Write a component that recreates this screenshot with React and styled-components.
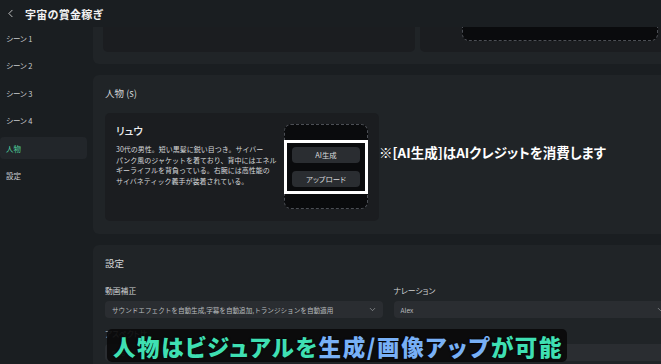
import styled, { createGlobalStyle } from 'styled-components';
import { ChevronLeft, ChevronDown } from 'lucide-react';

const GlobalStyle = createGlobalStyle`
  html, body {
    margin: 0;
    padding: 0;
    background: #1a1e21;
  }

  body {
    font-family: "Noto Sans CJK JP", "Noto Sans", sans-serif;
    font-feature-settings: "palt";
    color: #d6d8da;
  }

  #root {
    width: 661px;
    height: 364px;
    overflow: hidden;
  }
`;

const Shell = styled.div`
  position: relative;
  display: grid;
  grid-template-rows: 27px 1fr;
  width: 661px;
  height: 364px;
  overflow: hidden;
  background: #1a1e21;
`;

const Header = styled.div`
  display: flex;
  align-items: center;
  gap: 8px;
  padding-left: 4px;
  background: #1a1e21;
  color: #f2f2f2;

  h1 {
    margin: 0;
    font-size: 11px;
    font-weight: 700;
    letter-spacing: 0.3px;
  }
`;

const Body = styled.div`
  display: flex;
  min-height: 0;
`;

const Sidebar = styled.nav`
  flex: none;
  display: flex;
  flex-direction: column;
  gap: 5.6px;
  width: 87px;
  margin-right: 6px;
`;

const NavItem = styled.div`
  display: flex;
  align-items: center;
  height: 22px;
  padding-left: 6px;
  border-radius: 4px;
  font-size: 7.5px;
  color: ${({ $active }) => ($active ? '#4fcf9f' : '#c9cccf')};
  background: ${({ $active }) => ($active ? '#22262a' : 'transparent')};
`;

const Main = styled.main`
  flex: 1;
  min-width: 0;
  overflow: hidden;
`;

const Column = styled.div`
  display: flex;
  flex-direction: column;
  gap: 11px;
  width: 590px;
`;

const TopPanel = styled.section`
  display: flex;
  gap: 5px;
  padding: 0 10px 12px;
  background: #202427;
  border-radius: 0 0 6px 6px;
`;

const FlatCard = styled.div`
  flex: ${({ $grow }) => ($grow ? 1 : 'none')};
  width: ${({ $grow }) => ($grow ? 'auto' : '312px')};
  height: 25px;
  padding: ${({ $grow }) => ($grow ? '0 15px 0 42px' : '0')};
  background: #1b1d20;
  border-radius: 0 0 5px 5px;
`;

const DropZoneTail = styled.div`
  height: 13px;
  background: #0a0b0d;
  border: 1px dashed #4c4f55;
  border-top: none;
  border-radius: 0 0 7px 7px;
`;

const Panel = styled.section`
  padding: 12px 12px 13px;
  background: #202427;
  border-radius: 6px;
`;

const PanelTitle = styled.h2`
  margin: 0;
  font-size: 9.5px;
  line-height: 12px;
  font-weight: 400;
  color: #d2d4d6;
`;

const PersonRow = styled.div`
  display: flex;
  align-items: flex-start;
  margin-top: 14px;
`;

const PersonCard = styled.div`
  display: flex;
  justify-content: space-between;
  width: 274px;
  padding: 11px 11px 12px;
  box-sizing: border-box;
  background: #1b1d20;
  border-radius: 5px;
`;

const PersonText = styled.div`
  flex: none;
  width: 160px;

  h3 {
    margin: 0;
    font-size: 10.5px;
    line-height: 14px;
    font-weight: 500;
    color: #eceeef;
  }

  p {
    margin: 6px 0 0;
    font-size: 7px;
    line-height: 10.7px;
    font-feature-settings: normal;
    color: #d4d6d8;
    white-space: nowrap;
  }
`;

const ImageBox = styled.div`
  flex: none;
  display: flex;
  flex-direction: column;
  justify-content: center;
  width: 84px;
  height: 85px;
  box-sizing: border-box;
  background: #0a0b0d;
  border: 1px dashed #4c4f55;
  border-radius: 7px;
`;

const Highlight = styled.div`
  display: flex;
  flex-direction: column;
  gap: 8px;
  margin: 0 -1px;
  padding: 4px 5px;
  border: 3px solid #ffffff;
`;

const SmallButton = styled.button`
  height: 16px;
  padding: 0;
  border: none;
  border-radius: 4px;
  background: #2a2d31;
  color: #d8dadc;
  font-family: inherit;
  font-feature-settings: "palt";
  font-size: 7.4px;
`;

const Note = styled.div`
  margin-top: 29px;
  font-size: 13.5px;
  font-weight: 700;
  color: #ffffff;
  white-space: nowrap;
`;

const FieldGrid = styled.div`
  display: grid;
  grid-template-columns: 1fr 1fr;
  column-gap: 11px;
  row-gap: 10px;
  margin-top: 16px;
`;

const Field = styled.div`
  grid-column: ${({ $wide }) => ($wide ? '1 / -1' : 'auto')};
`;

const FieldLabel = styled.div`
  font-size: 7.8px;
  line-height: 11px;
  color: #d0d2d4;
`;

const Select = styled.div`
  display: flex;
  align-items: center;
  justify-content: space-between;
  height: 17px;
  margin-top: 5px;
  padding: 0 6px 0 7px;
  background: #2a2d31;
  border-radius: 4px;
  font-size: 6.6px;
  font-feature-settings: normal;
  color: #b9bcbf;
  white-space: nowrap;

  svg {
    flex: none;
    color: #aeb1b4;
  }
`;

const Caption = styled.div`
  position: absolute;
  left: 107px;
  top: 329px;
  width: 460px;
  height: 33px;
  box-sizing: border-box;
  padding-left: 6px;
  display: flex;
  align-items: center;
  background: rgba(10, 10, 11, 0.93);
  border-radius: 5px;
  font-size: 22.5px;
  font-weight: 900;
  letter-spacing: 1.6px;
  white-space: nowrap;
  color: #3fdfb2;
  text-shadow: 0 0 2px #000;
`;

const Accent = styled.span`
  color: #78b0f6;
`;

const navItems = ['シーン 1', 'シーン 2', 'シーン 3', 'シーン 4', '人物', '設定'];

const App = () => {
  return (
    <Shell>
      <GlobalStyle />
      <Header>
        <ChevronLeft size={13} strokeWidth={1.4} />
        <h1>宇宙の賞金稼ぎ</h1>
      </Header>
      <Body>
        <Sidebar>
          {navItems.map((item) => (
            <NavItem key={item} $active={item === '人物'}>{item}</NavItem>
          ))}
        </Sidebar>
        <Main>
          <Column>
            <TopPanel>
              <FlatCard />
              <FlatCard $grow>
                <DropZoneTail />
              </FlatCard>
            </TopPanel>

            <Panel>
              <PanelTitle>人物 (s)</PanelTitle>
              <PersonRow>
                <PersonCard>
                  <PersonText>
                    <h3>リュウ</h3>
                    <p>
                      30代の男性。短い黒髪に鋭い目つき。サイバー<br />
                      パンク風のジャケットを着ており、背中にはエネル<br />
                      ギーライフルを背負っている。右腕には高性能の<br />
                      サイバネティック義手が装着されている。
                    </p>
                  </PersonText>
                  <ImageBox>
                    <Highlight>
                      <SmallButton>AI生成</SmallButton>
                      <SmallButton>アップロード</SmallButton>
                    </Highlight>
                  </ImageBox>
                </PersonCard>
                <Note>※[AI生成]はAIクレジットを消費します</Note>
              </PersonRow>
            </Panel>

            <Panel>
              <PanelTitle>設定</PanelTitle>
              <FieldGrid>
                <Field>
                  <FieldLabel>動画補正</FieldLabel>
                  <Select>
                    <span>サウンドエフェクトを自動生成,字幕を自動追加,トランジションを自動適用</span>
                    <ChevronDown size={9} strokeWidth={1.6} />
                  </Select>
                </Field>
                <Field>
                  <FieldLabel>ナレーション</FieldLabel>
                  <Select>
                    <span>Alex</span>
                    <ChevronDown size={9} strokeWidth={1.6} />
                  </Select>
                </Field>
                <Field $wide>
                  <FieldLabel>アスペクト比</FieldLabel>
                  <Select>
                    <span>9:16</span>
                  </Select>
                </Field>
              </FieldGrid>
            </Panel>
          </Column>
        </Main>
      </Body>
      <Caption>
        人物はビジュアルを<Accent>生成/画像アップ</Accent>が可能
      </Caption>
    </Shell>
  );
};

export default App;
